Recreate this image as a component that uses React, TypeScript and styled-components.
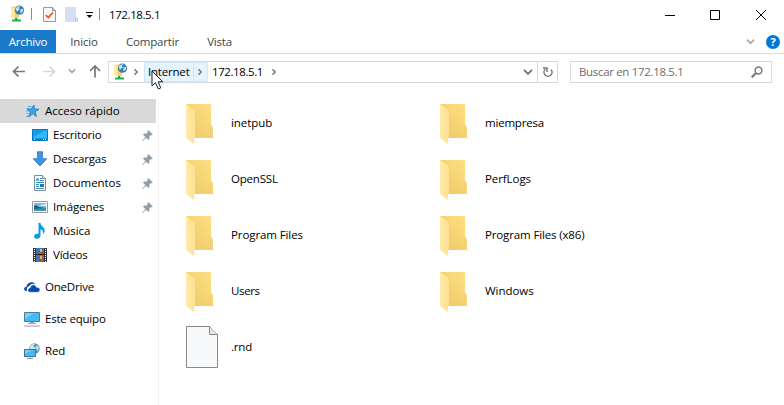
import React from "react";
import styled, { createGlobalStyle } from "styled-components";

const Global = createGlobalStyle`
  * { box-sizing: border-box; }
  body { margin: 0; background: #fff; overflow: hidden; }
  svg { display: block; flex: none; }
`;

const Window = styled.div`
  width: 784px;
  height: 405px;
  display: flex;
  flex-direction: column;
  background: #fff;
  color: #000;
  font: 11.5px/16px "Open Sans", "Noto Sans", sans-serif;
  white-space: nowrap;
`;
const Label = styled.span<{ $track?: number }>`
  letter-spacing: ${(p) => p.$track ?? -0.2}px;
`;
const TitleBar = styled.header`
  height: 30px;
  flex: none;
  display: flex;
  align-items: center;
  padding-left: 9px;
`;
const QuickTools = styled.div`
  display: flex;
  align-items: center;
  height: 28px;
  align-self: flex-start;
`;
const Separator = styled.i<{ $left: number; $right: number }>`
  width: 1px;
  height: 12px;
  flex: none;
  margin: 0 ${(p) => p.$right}px 0 ${(p) => p.$left}px;
  background: #8c8c8c;
`;
const Spacer = styled.span<{ $width: number }>`
  flex: none;
  width: ${(p) => p.$width}px;
`;
const WindowControls = styled.div`
  margin-left: auto;
  display: flex;
`;
const WindowButton = styled.button`
  width: 45.5px;
  height: 28px;
  border: 0;
  padding: 0;
  background: none;
  display: grid;
  place-items: center;
`;
const Ribbon = styled.nav`
  height: 24px;
  flex: none;
  display: flex;
  border-bottom: 1px solid #dadbdc;
`;
const Tab = styled.a<{ $width: number; $active?: boolean }>`
  width: ${(p) => p.$width}px;
  height: 23px;
  display: grid;
  place-items: center;
  color: ${(p) => (p.$active ? "#fff" : "#444")};
  background: ${(p) => (p.$active ? "#1979ca" : "transparent")};
`;
const RibbonEnd = styled.div`
  margin-left: auto;
  display: flex;
  align-items: center;
  gap: 11px;
  padding-right: 4px;
`;
const Help = styled.span`
  width: 14px;
  height: 14px;
  border-radius: 50%;
  background: #0078d7;
  color: #fff;
  font-weight: 700;
  font-size: 11px;
  line-height: 14px;
  text-align: center;
`;
const Navigation = styled.div`
  height: 45px;
  flex: none;
  display: flex;
  align-items: flex-start;
  padding: 7px 12px 0 12px;
`;
const Arrows = styled.div`
  width: 96px;
  height: 20px;
  display: flex;
  align-items: center;
`;
const Address = styled.div`
  width: 450px;
  height: 22px;
  border: 1px solid #d9d9d9;
  display: flex;
  align-items: center;
  padding-left: 3px;
`;
const Crumb = styled.div`
  display: flex;
  height: 20px;
  width: 64px;
  margin-left: 4px;
  border: 1px solid #cce8ff;
  background: #e5f3ff;
  align-items: center;
`;
const CrumbName = styled.div`
  width: 49px;
  height: 18px;
  padding-left: 3px;
  border-right: 1px solid #cce8ff;
  line-height: 18px;
`;
const AddressEnd = styled.div`
  margin-left: auto;
  display: flex;
  align-items: center;
  height: 20px;
`;
const Refresh = styled.div`
  width: 20px;
  height: 20px;
  margin-left: 4px;
  border-left: 1px solid #d9d9d9;
  display: grid;
  place-items: center;
`;
const Search = styled.div`
  width: 202px;
  height: 22px;
  margin-left: 12px;
  border: 1px solid #d9d9d9;
  padding: 0 8px;
  display: flex;
  align-items: center;
  justify-content: space-between;
  color: #6d6d6d;
`;
const Body = styled.div`
  flex: 1;
  display: flex;
  min-height: 0;
`;
const Sidebar = styled.aside`
  width: 159px;
  padding-right: 2px;
  border-right: 1px solid #f3f3f3;
`;
const SideItem = styled.div<{ $child?: boolean; $active?: boolean; $gap?: boolean }>`
  height: 24px;
  width: 156px;
  margin-top: ${(p) => (p.$gap ? 8 : 0)}px;
  padding: 0 3px 0 ${(p) => (p.$child ? 32 : 24)}px;
  background: ${(p) => (p.$active ? "#d9d9d9" : "transparent")};
  display: flex;
  align-items: center;
  gap: 5px;
  & > svg:nth-of-type(2) { margin-left: auto; }
`;
const Files = styled.main`
  display: grid;
  grid-template-columns: 254px 254px;
  grid-auto-rows: 56px;
  padding: 0 0 0 27px;
  margin-top: -4px;
`;
const File = styled.div`
  display: flex;
  align-items: center;
  gap: 13px;
`;

const ServerIcon = () => (
  <svg width="16" height="18" viewBox="0 0 16 18">
    <path d="M2 2 10 1v12H2z" fill="#f5d06c" />
    <path d="M2 2 5.500 3v10H2z" fill="#ffe9a3" />
    <path d="M6 13h2v2H6z" fill="#159b35" />
    <path d="M3 14.500h3V14h3v.5h3v2H3z" fill="#23b445" />
    <circle cx="10.500" cy="5.200" r="4.600" fill="#397eaa" />
    <path d="M6.500 3.500Q8.500.8 11.500 1L9.800 3l1 1.400-3 2.300zM11.500 4.200l2.800-.4-.5 3-2.600 1.400z" fill="#bce6f4" />
  </svg>
);
const CheckIcon = () => (
  <svg width="13" height="17" viewBox="0 0 13 17">
    <path d="M.5 1.500h9l3 3v11H.5z" fill="#f8f8f8" stroke="#999" />
    <path d="M9.500 1.500v3h3" fill="#ddd" stroke="#888" />
    <path d="m2.800 9 2.500 2.700L10 6.500" fill="none" stroke="#e8592c" strokeWidth="1.800" />
  </svg>
);
const NewIcon = () => (
  <svg width="13" height="17" viewBox="0 0 13 17">
    <path d="M0 1h11v10l2 1v4H0z" fill="#d3dff2" />
    <path d="M10.500 11v4.500M12.500 12v3.500" stroke="#bdcbe0" />
  </svg>
);
const MenuMark = () => (
  <svg width="17" height="9" viewBox="0 0 17 9">
    <path d="M2 2.500h7" stroke="#000" transform="translate(6 0)" />
    <path d="M8.500 5h6l-3 3z" />
  </svg>
);
const Chevron = ({ kind = "right", color = "#777", size = 8 }: { kind?: "right" | "down"; color?: string; size?: number }) => (
  <svg width={size} height={size} viewBox="0 0 8 8">
    <path d={kind === "right" ? "m2.500 1.200 2.700 2.800-2.700 2.800" : "m.8 2.300 3.200 3.200 3.200-3.200"} fill="none" stroke={color} strokeWidth="1.500" />
  </svg>
);
const Arrow = ({ turn = 0, color = "#777" }: { turn?: number; color?: string }) => (
  <svg width="14" height="14" viewBox="0 0 14 14">
    <path d="M13 7.500H2M6.500 2.500l-5 5 5 5" transform={`rotate(${turn} 7 7.500)`} fill="none" stroke={color} strokeWidth="1.700" />
  </svg>
);
const Pin = () => (
  <svg width="11" height="11" viewBox="0 0 11 11">
    <path d="m6.300 0 4.500 4.500-1 .8-.8-.3-1.800 1.900.1 2-1.100 1L4 7.700.6 10.900l-.5-.5L3.300 7 1 4.600l1-1 2.200.1L6 1.900 5.500.8z" fill="#929ea7" />
  </svg>
);
const StarIcon = () => (
  <svg width="16" height="16" viewBox="0 0 16 16">
    <path d="m9.800 2 .9 4 4.300.2-3.600 2.500 1 4.800-3.600-2.700L4.600 14l1.600-5-3-2.800 4.300-.4z" fill="#35a7e8" stroke="#187fb9" strokeWidth=".8" />
    <path d="M4 3.500h3.500M2.500 5.500h3M2 8h3M2.500 10.500h2M2 13.500h2" stroke="#55aede" />
  </svg>
);
const DesktopIcon = () => (
  <svg width="16" height="16" viewBox="0 0 16 16">
    <path d="M.5 2.500h15v11H.5z" fill="#159dec" stroke="#0878bb" />
    <path d="M1 10 15 3v8H1z" fill="#35b7ff" />
    <path d="M1 12.500h14" stroke="#066ba9" />
    <path d="M2 12.500h1M11 12.500h1M13 12.500h1" stroke="#fff" />
  </svg>
);
const DownloadIcon = () => (
  <svg width="16" height="16" viewBox="0 0 16 16">
    <path d="M5.500.7h5v7h4.300L8 15 1.200 7.700h4.300z" fill="#3d93df" stroke="#2977bd" strokeWidth=".8" />
  </svg>
);
const DocumentIcon = () => (
  <svg width="16" height="16" viewBox="0 0 16 16">
    <path d="M2.500.5h8l3 3v12h-11z" fill="#fff" stroke="#7e8b91" />
    <path d="M10.500.5v3h3" fill="#eee" stroke="#7e8b91" />
    <path d="m4 6 1.500-3L7 6M4.500 5h2M8 3.500h2M8 5.500h4M4 7.500h8M4 9.500h3M4 11.500h3M4 13.500h8" fill="none" stroke="#2a91c7" />
    <path d="M8 9h4v3H8z" fill="#466f78" />
  </svg>
);
const PictureIcon = () => (
  <svg width="16" height="16" viewBox="0 0 16 16">
    <path d="M.5 2.500h15v11H.5z" fill="#fff" stroke="#999" />
    <path d="M2 4h12v8H2z" fill="#77bce8" />
    <path d="M2 7q2-2 5 1l7 1v3H2z" fill="#285f73" />
    <path d="m2 10 12-1v3H2z" fill="#3995b5" />
    <path d="m8 6 6-1v2H9z" fill="#d8edf6" />
  </svg>
);
const MusicIcon = () => (
  <svg width="16" height="16" viewBox="0 0 16 16">
    <path d="M6.500 0h2c0 3.300 4.800 4.100 4.200 8.300-.1 1.100-.7 2-1.600 2.700.5-2.600-.5-4-2.600-4.700v6.200c0 4.300-6.700 4.300-6.400.7.2-2.400 2.800-3 4.400-2.300z" fill="#0999ee" />
  </svg>
);
const VideoIcon = () => (
  <svg width="16" height="16" viewBox="0 0 16 16">
    <path d="M1 1h14v14H1z" fill="#333" />
    <path d="M4 1h8v14H4z" fill="#3976c5" />
    <path d="M4 7h8v1H4z" fill="#222" />
    <path d="m6 4 2-1 3 1 1 2-3 1-2-1zM6 11l2-1 3 1 1 2-3 1-2-1z" fill="#b64737" />
    <path d="M8 2h2v3H8zM8 9h2v3H8z" fill="#e2be38" />
    <path d="M2.500 2v13M13.500 2v13" stroke="#fff" strokeDasharray="1 1" />
  </svg>
);
const OneDriveIcon = () => (
  <svg width="16" height="16" viewBox="0 0 16 16">
    <path d="M2 12C-.7 11.500-.4 8 2.400 7.800 2.800 3.600 8.500 1.800 11.500 5 8 4.200 6 5.400 5.200 7.200 3.200 7.400 2.400 9.500 3 12z" fill="#094ab2" />
    <path d="M6 13.300c-2.800 0-2.900-4 .2-4.500C6.600 5 11.500 4.700 12.500 8.300c4.200-.4 4.600 5 1 5z" fill="#094ab2" stroke="#fff" strokeWidth=".5" />
  </svg>
);
const ComputerIcon = () => (
  <svg width="16" height="16" viewBox="0 0 16 16">
    <path d="M.5 1.500h15v9H.5z" fill="#42b9f5" stroke="#4c7b95" />
    <path d="M1 8 10 2H1z" fill="#75d0fc" />
    <path d="M6 11h4v1H6z" fill="#9daab2" />
    <path d="M4 12.500h8M0 15h16" stroke="#92a0a8" />
  </svg>
);
const NetworkIcon = () => (
  <svg width="16" height="16" viewBox="0 0 16 16">
    <circle cx="10.500" cy="5.500" r="5.200" fill="#6598af" />
    <path d="M6 3Q9 0 11 1L9 3l3 2-2 2-4-1zM13 2l2 3-2 3-1-4z" fill="#c4e7ed" />
    <path d="M.5 6.500h11v7H.5z" fill="#43baf6" stroke="#37718f" />
    <path d="m1 11 7-4H1z" fill="#78d2fb" />
    <path d="M3 15.500h6M6 13v2" stroke="#8b9ba5" />
  </svg>
);
const FolderIcon = () => (
  <svg width="32" height="44" viewBox="0 0 32 44">
    <defs>
      <linearGradient id="back" x1="0" y1="1" x2="1" y2="0"><stop stopColor="#edc864" /><stop offset="1" stopColor="#fde085" /></linearGradient>
      <linearGradient id="flap"><stop stopColor="#ffeaa9" /><stop offset="1" stopColor="#fee192" /></linearGradient>
    </defs>
    <path d="m8 42 3-2H9zM26 37h4l-3 1z" fill="#e9e9e9" />
    <path d="M0 3h25v21l2 2v11H8L0 9z" fill="url(#back)" />
    <path d="m0 3 9 7v26l-1 1v6l-8-6z" fill="url(#flap)" />
    <path d="M25 24v13" stroke="#f2ce69" strokeWidth=".6" />
  </svg>
);
const BlankFileIcon = () => (
  <svg width="32" height="44" viewBox="0 0 32 44">
    <path d="M.5 1.500h23l8 8v33H.5z" fill="#f7f9fa" stroke="#888" />
    <path d="M23.500 1.500v8h8" fill="#e6e6e6" stroke="#888" />
  </svg>
);
const Pointer = styled.svg`
  position: absolute;
  left: 151px;
  top: 70px;
`;

const places = [
  { name: "Acceso rápido", icon: <StarIcon />, active: true, track: -0.03 },
  { name: "Escritorio", icon: <DesktopIcon />, child: true, pin: true },
  { name: "Descargas", icon: <DownloadIcon />, child: true, pin: true },
  { name: "Documentos", icon: <DocumentIcon />, child: true, pin: true, track: -0.06 },
  { name: "Imágenes", icon: <PictureIcon />, child: true, pin: true, track: -0.1 },
  { name: "Música", icon: <MusicIcon />, child: true, track: -0.05 },
  { name: "Vídeos", icon: <VideoIcon />, child: true },
  { name: "OneDrive", icon: <OneDriveIcon />, gap: true },
  { name: "Este equipo", icon: <ComputerIcon />, gap: true },
  { name: "Red", icon: <NetworkIcon />, gap: true },
];
const files = [
  { name: "inetpub", track: -0.05 },
  { name: "miempresa" },
  { name: "OpenSSL" },
  { name: "PerfLogs", track: -0.08 },
  { name: "Program Files", track: -0.1 },
  { name: "Program Files (x86)", track: -0.14 },
  { name: "Users", track: -0.35 },
  { name: "Windows", track: -0.05 },
  { name: ".rnd", blank: true },
];

export default function App() {
  return (
    <Window>
      <Global />
      <TitleBar>
        <QuickTools>
          <ServerIcon />
          <Separator $left={6} $right={11} />
          <CheckIcon />
          <Spacer $width={9} />
          <NewIcon />
          <MenuMark />
          <Separator $left={4} $right={9} />
        </QuickTools>
        <Label $track={-0.4}>172.18.5.1</Label>
        <WindowControls>
          <WindowButton><svg width="10" height="10"><path d="M0 5.500h10" stroke="#000" /></svg></WindowButton>
          <WindowButton><svg width="11" height="10"><path d="M.5.5h9v9h-9z" fill="none" stroke="#000" /></svg></WindowButton>
          <WindowButton><svg width="10" height="10"><path d="m0 0 10 10M10 0 0 10" stroke="#000" /></svg></WindowButton>
        </WindowControls>
      </TitleBar>
      <Ribbon>
        <Tab $width={56} $active><Label>Archivo</Label></Tab>
        <Tab $width={56}><Label>Inicio</Label></Tab>
        <Tab $width={81}><Label>Compartir</Label></Tab>
        <Tab $width={53}><Label>Vista</Label></Tab>
        <RibbonEnd><Chevron kind="down" color="#aaa" size={9} /><Help>?</Help></RibbonEnd>
      </Ribbon>
      <Navigation>
        <Arrows>
          <Arrow />
          <Spacer $width={16} />
          <Arrow turn={180} color="#d5d5d5" />
          <Spacer $width={12} />
          <Chevron kind="down" color="#999" />
          <Spacer $width={12} />
          <Arrow turn={90} />
        </Arrows>
        <Address>
          <ServerIcon />
          <Spacer $width={4} />
          <Chevron />
          <Crumb>
            <CrumbName><Label>Internet</Label></CrumbName>
            <Spacer $width={2} />
            <Chevron />
          </Crumb>
          <Spacer $width={4} />
          <Label $track={-0.42}>172.18.5.1</Label>
          <Spacer $width={7} />
          <Chevron />
          <AddressEnd>
            <Chevron kind="down" size={10} />
            <Refresh>
              <svg width="12" height="12" viewBox="0 0 12 12">
                <path d="M3.300 3.300a4 4 0 1 0 5.800.4M1 2h4v4" fill="none" stroke="#777" strokeWidth="1.500" />
              </svg>
            </Refresh>
          </AddressEnd>
        </Address>
        <Search>
          <Label $track={-0.33}>Buscar en 172.18.5.1</Label>
          <svg width="12" height="12" viewBox="0 0 12 12"><circle cx="7.500" cy="4.500" r="3.400" fill="none" stroke="#777" strokeWidth="1.500" /><path d="M5 7 .7 11.200" stroke="#777" strokeWidth="2" /></svg>
        </Search>
      </Navigation>
      <Body>
        <Sidebar>
          {places.map((p) => (
            <SideItem key={p.name} $child={p.child} $active={p.active} $gap={p.gap}>
              {p.icon}
              <Label $track={p.track}>{p.name}</Label>
              {p.pin && <Pin />}
            </SideItem>
          ))}
        </Sidebar>
        <Files>
          {files.map((f) => (
            <File key={f.name}>
              {f.blank ? <BlankFileIcon /> : <FolderIcon />}
              <Label $track={f.track}>{f.name}</Label>
            </File>
          ))}
        </Files>
      </Body>
      <Pointer width="13" height="21" viewBox="0 0 13 21">
        <path d="M1 1v15l3.500-3.300 2.800 6.300 2.500-1.100-2.700-6.100h4.700z" fill="#fff" stroke="#182235" />
      </Pointer>
    </Window>
  );
}
